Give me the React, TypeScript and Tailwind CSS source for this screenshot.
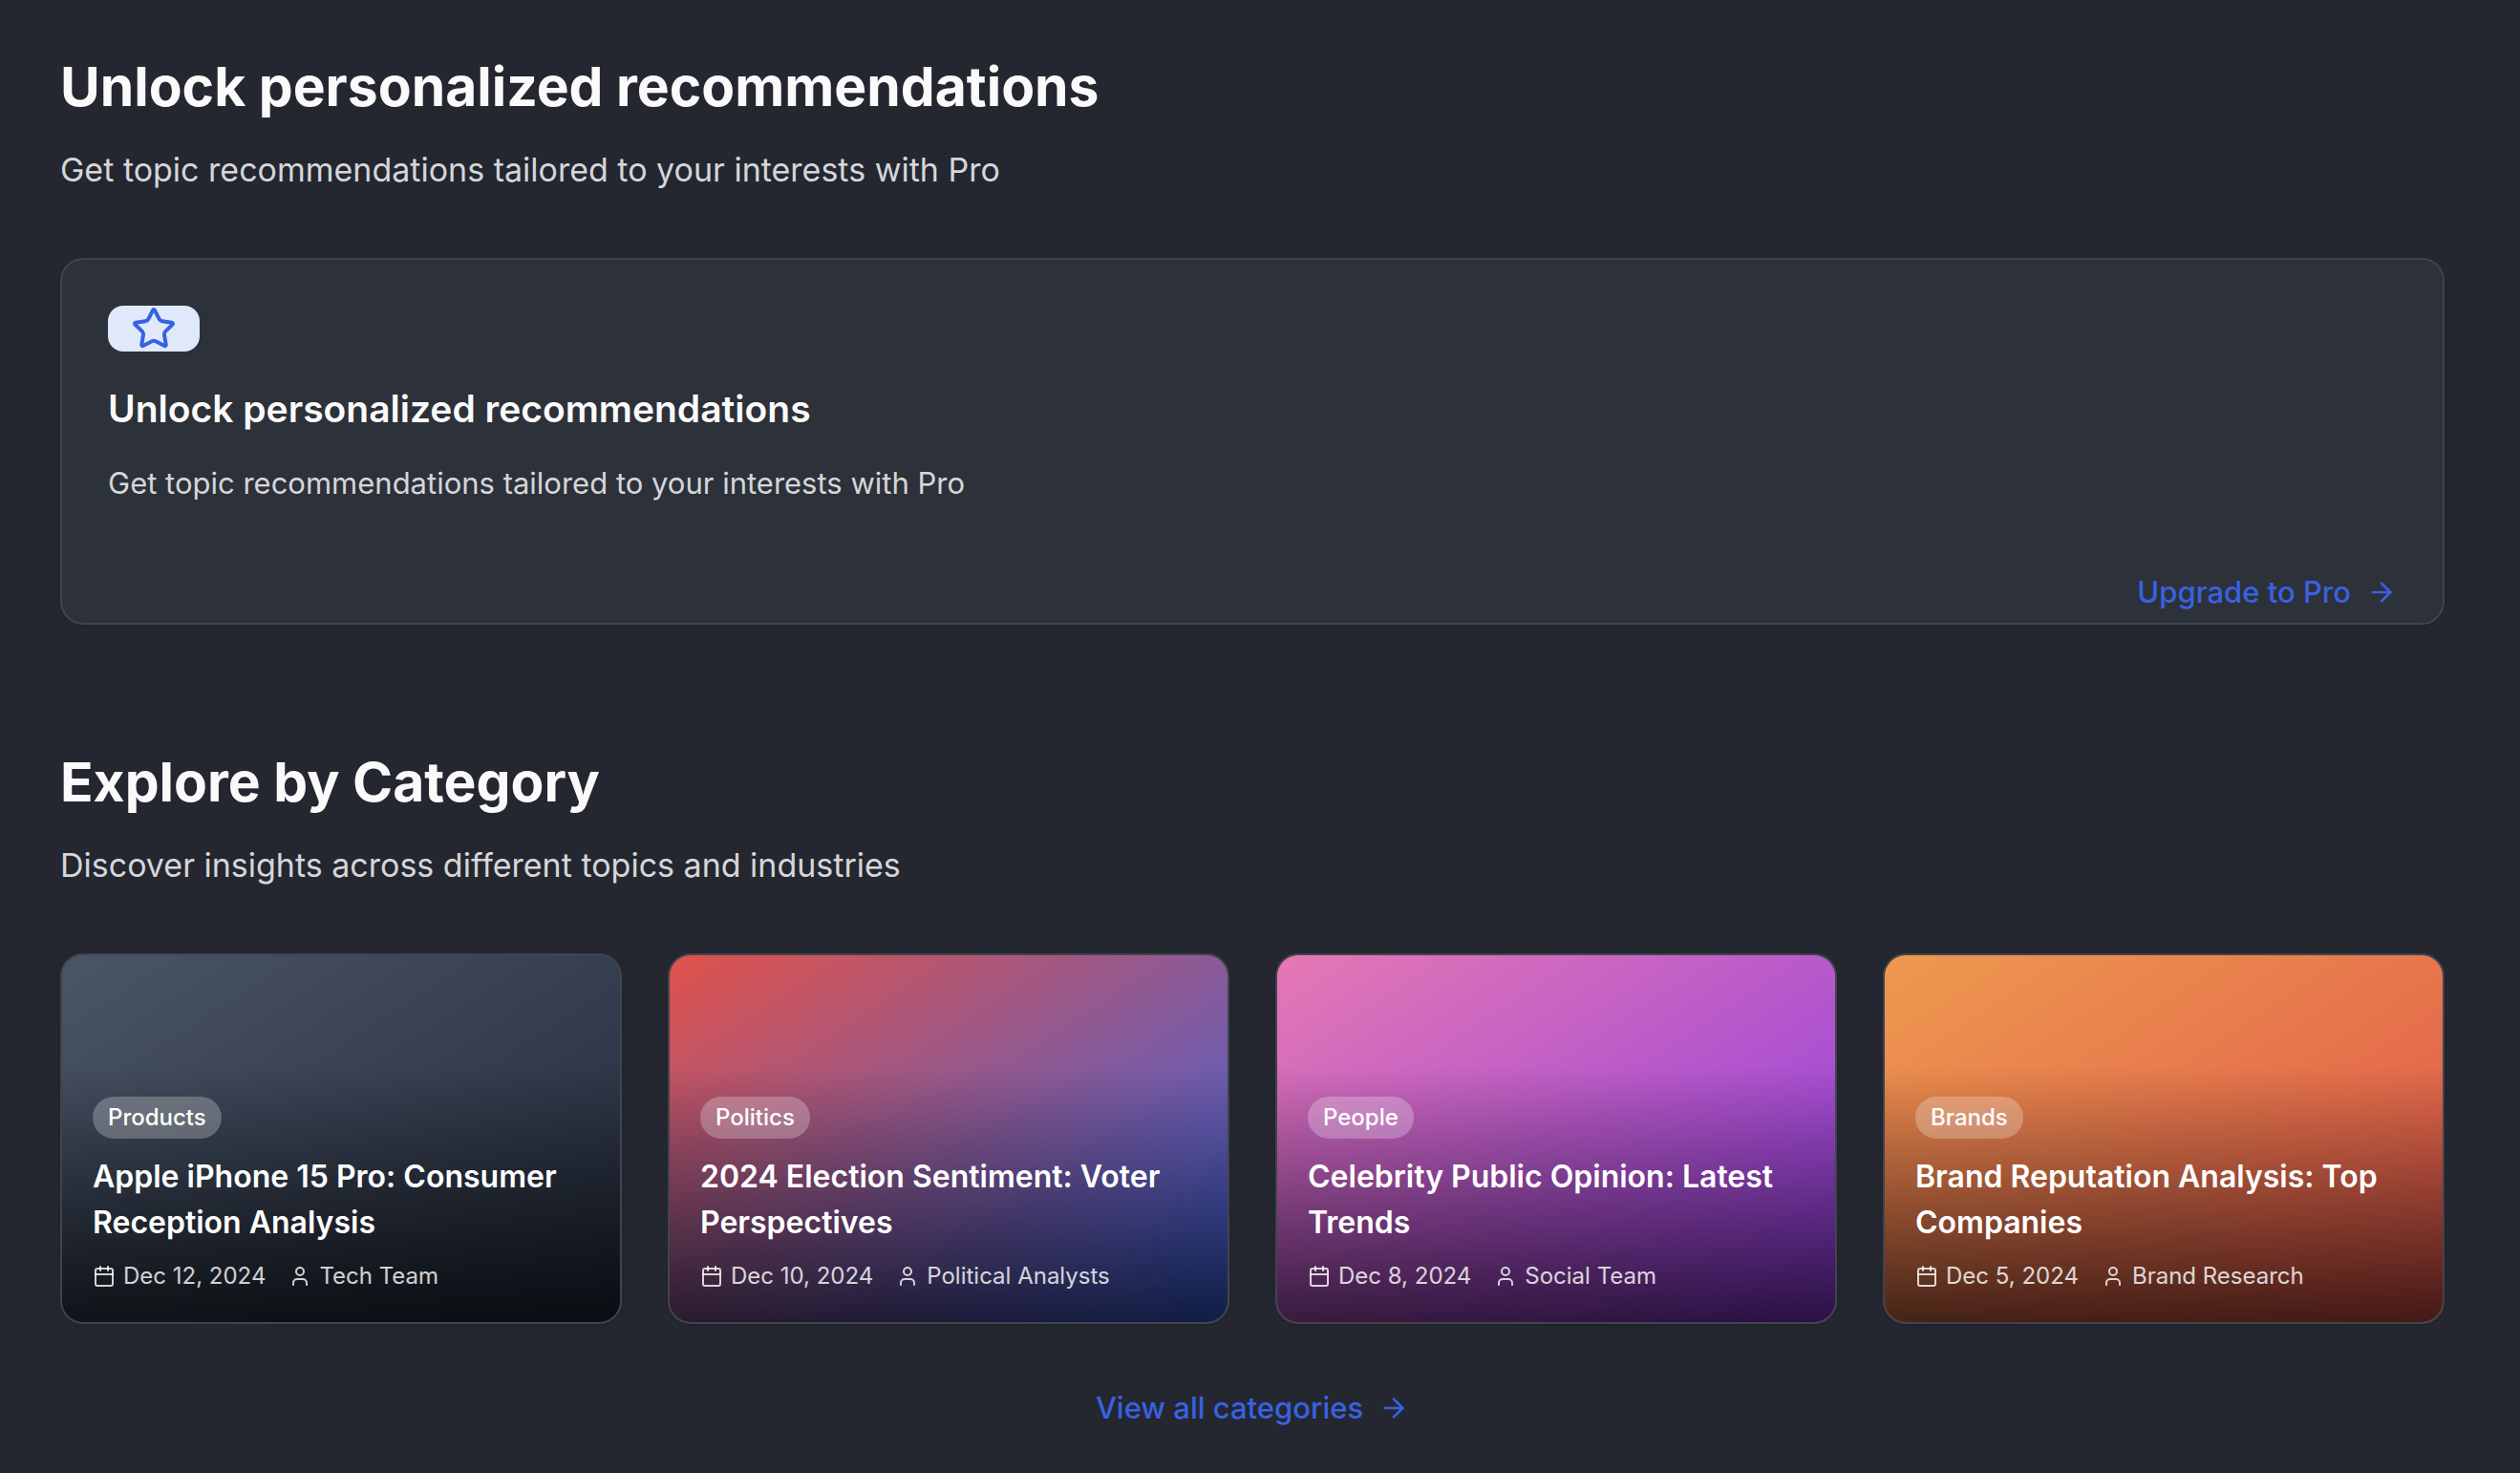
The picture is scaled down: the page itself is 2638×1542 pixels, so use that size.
import { ArrowRight, Calendar, Star, User } from "lucide-react";

type Topic = {
  category: string;
  title: string;
  date: string;
  author: string;
  gradient: string;
};

const topics: Topic[] = [
  {
    category: "Products",
    title: "Apple iPhone 15 Pro: Consumer Reception Analysis",
    date: "Dec 12, 2024",
    author: "Tech Team",
    gradient: "from-[#4a5567] to-[#212938]",
  },
  {
    category: "Politics",
    title: "2024 Election Sentiment: Voter Perspectives",
    date: "Dec 10, 2024",
    author: "Political Analysts",
    gradient: "from-[#e0524a] to-[#3662e3]",
  },
  {
    category: "People",
    title: "Celebrity Public Opinion: Latest Trends",
    date: "Dec 8, 2024",
    author: "Social Team",
    gradient: "from-[#e578b3] to-[#8b3ae2]",
  },
  {
    category: "Brands",
    title: "Brand Reputation Analysis: Top Companies",
    date: "Dec 5, 2024",
    author: "Brand Research",
    gradient: "from-[#ee994f] to-[#df5249]",
  },
];

function SectionHeader({ title, subtitle }: { title: string; subtitle: string }) {
  return (
    <header className="mb-16">
      <h2 className="text-[57px] leading-[70px] font-bold">{title}</h2>
      <p className="mt-6 text-[34px] leading-[56px] text-[#d5d6da]">{subtitle}</p>
    </header>
  );
}

function ArrowLink({ children }: { children: string }) {
  return (
    <a href="#" className="inline-flex items-center gap-4 text-[31px] leading-[48px] font-medium text-[#3862e2]">
      {children}
      <ArrowRight className="size-8" aria-hidden="true" />
    </a>
  );
}

function TopicCard({ topic }: { topic: Topic }) {
  return (
    <a
      href="#"
      className="flex min-h-[388px] flex-col justify-end overflow-hidden rounded-3xl border-2 border-[#41444f] bg-[#41444f] shadow-sm"
    >
      <article className={`flex grow flex-col justify-end bg-linear-to-br/srgb ${topic.gradient}`}>
        <div className="bg-linear-to-t/srgb from-black/70 to-transparent p-8">
          <span className="flex h-11 w-fit items-center rounded-full bg-white/25 px-4 text-[24px] font-medium text-white">
            {topic.category}
          </span>
          <h3 className="mt-4 text-[32px] leading-[48px] font-semibold text-white">{topic.title}</h3>
          <div className="mt-4 flex items-center gap-6 text-[24px] leading-[32px] text-white/80">
            <span className="flex items-center gap-2">
              <Calendar className="size-6" aria-hidden="true" />
              {topic.date}
            </span>
            <span className="flex items-center gap-2">
              <User className="size-6" aria-hidden="true" />
              {topic.author}
            </span>
          </div>
        </div>
      </article>
    </a>
  );
}

export default function App() {
  return (
    <main className="min-h-screen bg-[#24272f] pt-14 pr-[79px] pb-11 pl-[63px] font-['Inter',sans-serif] text-[#fafafa]">
      <section>
        <SectionHeader
          title="Unlock personalized recommendations"
          subtitle="Get topic recommendations tailored to your interests with Pro"
        />
        <div className="rounded-3xl border-2 border-[#41444f] bg-[#2d3139] px-12 pt-12 pb-2 shadow-sm">
          <div className="flex h-12 w-24 items-center justify-center rounded-2xl bg-[#dfe9fb]">
            <Star className="size-12 text-[#3862e2]" aria-hidden="true" />
          </div>
          <h3 className="mt-8 text-[39px] leading-[56px] font-semibold">Unlock personalized recommendations</h3>
          <p className="mt-6 text-[31px] leading-[52px] text-[#d5d6da]">
            Get topic recommendations tailored to your interests with Pro
          </p>
          <div className="mt-16 flex justify-end">
            <ArrowLink>Upgrade to Pro</ArrowLink>
          </div>
        </div>
      </section>

      <section className="mt-[130px]">
        <SectionHeader
          title="Explore by Category"
          subtitle="Discover insights across different topics and industries"
        />
        <div className="grid grid-cols-4 gap-12">
          {topics.map((topic) => (
            <TopicCard key={topic.category} topic={topic} />
          ))}
        </div>
        <div className="mt-16 flex justify-center">
          <ArrowLink>View all categories</ArrowLink>
        </div>
      </section>
    </main>
  );
}
